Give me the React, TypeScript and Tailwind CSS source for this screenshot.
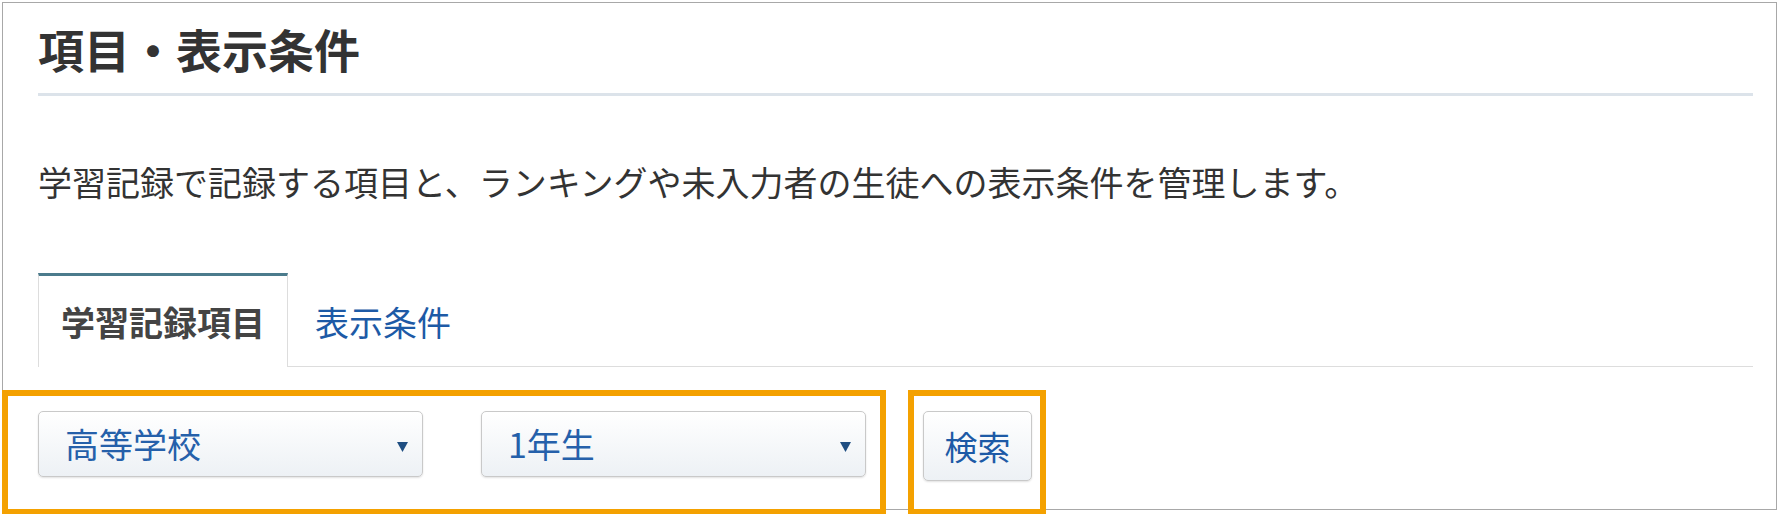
export default function App() {
  return (
    <div className="relative w-[1779px] h-[514px] bg-white font-['Noto_Sans_CJK_JP','Noto_Sans',sans-serif]">
      <div className="ml-[2px] mt-[2px] w-[1775px] h-[508px] border border-[#a8a8a8] pl-[35px] pr-[23px] pt-[22px]">
        <h2 className="text-[46px] leading-[46px] font-bold text-[#333] pb-[22px] border-b-[3px] border-[#dce3ea]">
          項目・表示条件
        </h2>

        <p className="mt-[69px] text-[34px] leading-[34px] text-[#333]">
          学習記録で記録する項目と、ランキングや未入力者の生徒への表示条件を管理します。
        </p>

        <ul className="mt-[74px] flex border-b border-[#dddddd]">
          <li className="-mb-px mr-[2px] border-t-[3px] border-x border-t-[#4b7b8c] border-x-[#dddddd] bg-white px-[22px] pt-[29px] pb-[28px] text-[34px] leading-[34px] font-bold text-[#444]">
            学習記録項目
          </li>
          <li className="-mb-px border-t-[3px] border-x border-transparent px-[24px] pt-[29px] pb-[28px] text-[34px] leading-[34px] text-[#1d5aa6]">
            表示条件
          </li>
        </ul>

        <div className="mt-[44px] flex items-start">
          <Select label="高等学校" />
          <div className="ml-[58px]">
            <Select label="1年生" />
          </div>
          <button className="ml-[57px] w-[109px] h-[70px] rounded-[5px] border border-[#c9c9c9] bg-linear-to-b from-white to-[#edf1f5] shadow-[0_1px_2px_rgba(0,0,0,0.12)] text-[33px] leading-[33px] text-[#1d5aa6]">
            検索
          </button>
        </div>
      </div>

      {/* annotation boxes */}
      <div className="absolute left-[2px] top-[388px] w-[884px] h-[125px] border-[6px] border-[#f4a100]" />
      <div className="absolute left-[908px] top-[388px] w-[138px] h-[125px] border-[6px] border-[#f4a100]" />
    </div>
  );
}

function Select({ label }: { label: string }) {
  return (
    <div className="w-[385px] h-[66px] rounded-[5px] border border-[#c9c9c9] bg-linear-to-b from-white to-[#edf1f5] shadow-[0_1px_2px_rgba(0,0,0,0.12)] pl-[26px] pr-[14px] flex items-center justify-between">
      <span className="text-[34px] leading-[34px] text-[#2560aa]">{label}</span>
      <svg width="11" height="10" viewBox="0 0 11 10" className="mt-[6px]">
        <path d="M0 0 H11 L5.5 10 Z" fill="#1f4e82" />
      </svg>
    </div>
  );
}
